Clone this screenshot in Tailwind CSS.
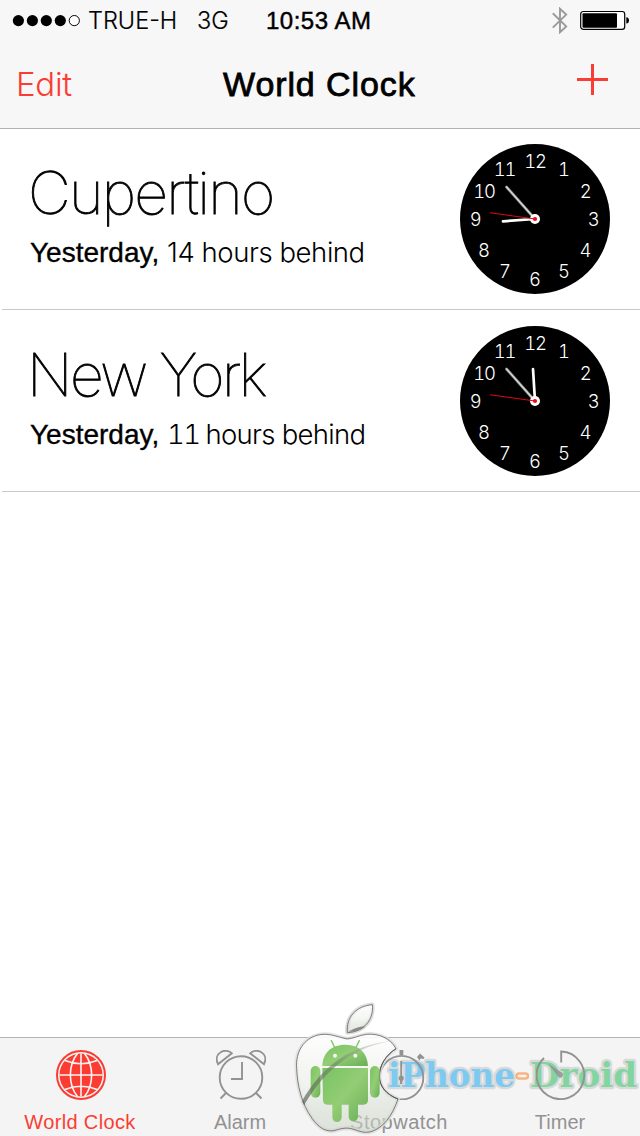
<!DOCTYPE html>
<html lang="en">
<head>
<meta charset="utf-8">
<title>World Clock</title>
<script src="https://cdn.jsdelivr.net/npm/@tailwindcss/browser@4"></script>
</head>
<body class="bg-white">
<div class="relative flex h-[1136px] w-[640px] flex-col overflow-hidden bg-white font-['Liberation_Sans',sans-serif] whitespace-nowrap text-black">

  <header class="h-[129px] shrink-0 border-b border-[#b2b2b2] bg-[#f7f7f7]">
    <!-- Status bar -->
    <div class="flex h-10 pr-[10px] pl-3 leading-[41px]">
      <svg class="mt-[13px] h-4 w-[70px] shrink-0" viewBox="0 0 70 16">
        <circle cx="6.4" cy="7.6" r="5.6"/><circle cx="20.4" cy="7.6" r="5.6"/><circle cx="34.3" cy="7.6" r="5.6"/><circle cx="48.3" cy="7.6" r="5.6"/>
        <circle cx="62.3" cy="7.6" r="5.1" fill="#fff" stroke="#000" stroke-width="1"/>
      </svg>
      <span class="ml-[6px] w-[109px] font-['Inter',sans-serif] text-[23.5px] font-light [-webkit-text-stroke:0.2px_#000]">TRUE-H</span>
      <span class="w-[69px] font-['Inter',sans-serif] text-[23.5px] font-light [-webkit-text-stroke:0.2px_#000]">3G</span>
      <span class="text-[24px] tracking-[0.5px] [-webkit-text-stroke:0.45px_#000]">10:53 AM</span>
      <svg class="mt-[7px] ml-auto h-[27px] w-4 shrink-0" viewBox="0 0 16 27" fill="none" stroke="#999" stroke-width="1.9">
        <path d="M.8 6.3 14.2 19.4 8 25.200V1.800L14.200 7.600.8 20.600"/>
      </svg>
      <svg class="mt-[10px] ml-[12px] h-5 w-[50px] shrink-0" viewBox="0 0 50 20">
        <rect x=".7" y="1.500" width="44" height="17.800" rx="2.600" fill="#fff" stroke="#000" stroke-width="1.200"/>
        <rect x="2.500" y="3.200" width="34.500" height="14.600" rx="1"/>
        <path d="M46.300 7.200c3.600 0 3.600 6.400 0 6.400z"/>
      </svg>
    </div>
    <!-- Navigation bar -->
    <div class="grid h-[88px] grid-cols-3 pr-[30px] pl-[16px] leading-[88px]">
      <span class="font-['Inter',sans-serif] text-[33px] font-light tracking-[-0.3px] text-[#fb3c33]">Edit</span>
      <h1 class="ml-[9px] text-[34px] tracking-[0.9px] [-webkit-text-stroke:0.8px_#000]">World Clock</h1>
      <svg class="mt-[23px] mr-px h-8 w-8 justify-self-end" viewBox="0 0 32 32" fill="none" stroke="#fb3c33" stroke-width="3"><path d="M0 16.500h31M15.500 1v31"/></svg>
    </div>
  </header>

  <main class="-mt-px flex-1">
    <section class="ml-[2px] flex h-[182px] justify-between border-b border-[#c8c8c8] pr-[30px] pl-[28px]">
      <div class="pt-[29px]">
        <h2 class="-ml-[2px] font-['Inter',sans-serif] text-[59px] leading-[72px] font-thin tracking-[-1.7px] [-webkit-text-stroke:0.9px_#000]">Cupertino</h2>
        <p class="flex leading-[46px]"><span class="w-[137px] pt-px text-[28px] [-webkit-text-stroke:0.35px_#000]">Yesterday,</span><span class="font-['Inter',sans-serif] text-[27.5px] font-light tracking-[-0.43px]">14 hours behind</span></p>
      </div>
      <svg class="mt-[16px] size-[150px]" viewBox="0 0 150 150">
        <circle cx="75" cy="75" r="75"/>
        <g fill="#fff" font-family="Inter, sans-serif" font-size="18.500" font-weight="300" text-anchor="middle" class="tabular-nums tracking-[-1.2px]">
          <text x="75" y="23.600">12</text><text x="103.500" y="31.800">1</text><text x="125.200" y="53.600">2</text><text x="133.200" y="82.400">3</text><text x="124.800" y="112.800">4</text><text x="103.500" y="133.800">5</text><text x="74.500" y="141.800">6</text><text x="44.500" y="133.800">7</text><text x="23.500" y="112.800">8</text><text x="15.200" y="82.400">9</text><text x="24" y="53.600">10</text><text x="44.500" y="31.800">11</text>
        </g>
        <g stroke-linecap="round">
          <path d="M75 75 46.500 43" stroke="#888" stroke-width="2.800"/><path d="M75 75 46.500 43" stroke="#ddd" stroke-width="1.200"/>
          <path d="M75 75 43 77.300" stroke="#fff" stroke-width="2.700"/>
        </g>
        <circle cx="75" cy="75" r="5" fill="#fff"/>
        <path d="M75 75 30 68.700" stroke="#e00812" stroke-width="1.100"/><circle cx="75" cy="75" r="2.100" fill="#f00812"/>
      </svg>
    </section>

    <section class="ml-[2px] flex h-[182px] justify-between border-b border-[#c8c8c8] pr-[30px] pl-[28px]">
      <div class="pt-[29px]">
        <h2 class="-ml-[3px] font-['Inter',sans-serif] text-[59px] leading-[72px] font-thin tracking-[-2.5px] [-webkit-text-stroke:0.9px_#000]">New York</h2>
        <p class="flex leading-[46px]"><span class="w-[137px] pt-px text-[28px] [-webkit-text-stroke:0.35px_#000]">Yesterday,</span><span class="font-['Inter',sans-serif] text-[27.5px] font-light tracking-[-0.7px]"><span class="tracking-[-1.6px] tabular-nums">11</span><span class="-ml-px"> hours behind</span></span></p>
      </div>
      <svg class="mt-[16px] size-[150px]" viewBox="0 0 150 150">
        <circle cx="75" cy="75" r="75"/>
        <g fill="#fff" font-family="Inter, sans-serif" font-size="18.500" font-weight="300" text-anchor="middle" class="tabular-nums tracking-[-1.2px]">
          <text x="75" y="23.600">12</text><text x="103.500" y="31.800">1</text><text x="125.200" y="53.600">2</text><text x="133.200" y="82.400">3</text><text x="124.800" y="112.800">4</text><text x="103.500" y="133.800">5</text><text x="74.500" y="141.800">6</text><text x="44.500" y="133.800">7</text><text x="23.500" y="112.800">8</text><text x="15.200" y="82.400">9</text><text x="24" y="53.600">10</text><text x="44.500" y="31.800">11</text>
        </g>
        <g stroke-linecap="round">
          <path d="M75 75 46.500 43" stroke="#888" stroke-width="2.800"/><path d="M75 75 46.500 43" stroke="#ddd" stroke-width="1.200"/>
          <path d="M75 75 73 43" stroke="#fff" stroke-width="2.700"/>
        </g>
        <circle cx="75" cy="75" r="5" fill="#fff"/>
        <path d="M75 75 30 68.700" stroke="#e00812" stroke-width="1.100"/><circle cx="75" cy="75" r="2.100" fill="#f00812"/>
      </svg>
    </section>
  </main>

  <!-- Tab bar -->
  <footer class="relative h-[99px] shrink-0 border-t border-[#b2b2b2] bg-[#f4f4f4]">
    <!-- Watermark lettering -->
    <svg class="absolute top-0 right-0 h-[98px] w-[260px]" viewBox="380 1038 260 98" font-family="DejaVu Serif, serif" font-weight="700" font-size="33.500" stroke-linejoin="round" paint-order="stroke" stroke="#d9d9d9" stroke-width="4.500">
      <text x="388" y="1086.500" fill="#7cc9f2" textLength="127" lengthAdjust="spacingAndGlyphs">iPhone</text>
      <rect x="516.500" y="1073.500" width="11.500" height="5" rx="2.500" fill="#f4f4f4" stroke="#f9b282" stroke-width="2.400" paint-order="normal"/>
      <text x="530" y="1086.500" fill="#83d5a0" textLength="107" lengthAdjust="spacingAndGlyphs">Droid</text>
    </svg>

    <nav class="relative grid grid-cols-4 pt-3 text-[20px] leading-6 text-[#929292]">
      <div class="flex flex-col items-center text-[#fb3c33]">
        <svg class="ml-[2px] size-[50px]" viewBox="0 0 50 50" fill="none">
          <circle cx="25" cy="25" r="24" stroke="currentColor" stroke-width="2"/><circle cx="25" cy="25" r="21.500" fill="currentColor"/>
          <g stroke="#f9f4f4" stroke-width="1.600"><path d="M25 3.500v43M3.500 25h43M9 10.500q16 6.500 32 0M9 39.500q16-6.500 32 0"/><path d="M21.500 3.500C12 15 12 35 21.500 46.500M28.500 3.500C38 15 38 35 28.500 46.500"/></g>
        </svg>
        <span class="mt-[10px] tracking-[0.35px]">World Clock</span>
      </div>
      <div class="flex flex-col items-center">
        <svg class="ml-[2px] size-[50px]" viewBox="0 0 50 50" fill="none" stroke="currentColor" stroke-width="1.900">
          <circle cx="25" cy="27.500" r="21.300"/><path d="M26 12v17H15M10.500 42.500 4.500 48.500M39.500 42.500l6 6"/>
          <path d="M2 14.200C-.5 9 .8 4.500 4.700 2.200 8.500-.2 13.500.8 15.800 3.300L2 14.200ZM48 14.200c2.500-5.200 1.200-9.700-2.700-12C41.500-.2 36.500.8 34.200 3.300L48 14.200Z"/>
        </svg>
        <span class="mt-[10px]">Alarm</span>
      </div>
      <div class="flex flex-col items-center">
        <svg class="ml-[2px] size-[50px]" viewBox="0 0 50 50" fill="none" stroke="currentColor" stroke-width="1.900">
          <circle cx="25.500" cy="27.700" r="21.800"/><path d="M25.200 11v23"/>
          <path d="M23.500 0h3.800v5h-3.800zM41 7l3-3.500 4.500 4-1 1.500-3-.5-1 2z" fill="currentColor" stroke="none"/>
          <path d="M25.200 25.500a2.800 2.800 0 0 1 1.300 5.200l-.7 3.300h-1.200l-.7-3.300a2.800 2.800 0 0 1 1.300-5.200z" fill="currentColor" stroke="none"/>
        </svg>
        <span class="mt-[10px] -ml-[2px] tracking-[0.5px]">Stopwatch</span>
      </div>
      <div class="flex flex-col items-center">
        <svg class="ml-[2px] size-[50px]" viewBox="0 0 50 50" fill="none" stroke="currentColor" stroke-width="1.900">
          <path d="M25.200 12.500V1.500A23.800 23.800 0 1 1 8 8"/><path d="M12 13.500 26.500 23a3 3 0 0 1-3.500 4.500z" fill="currentColor" stroke="none" opacity=".85"/>
        </svg>
        <span class="mt-[10px]">Timer</span>
      </div>
    </nav>
  </footer>

  <!-- Watermark badge: glass apple with a robot inside -->
  <svg class="absolute top-[1000px] left-[290px] h-[136px] w-[110px]" viewBox="0 0 330 408">
    <defs>
      <linearGradient id="glass" x1="0" y1="0" x2="0" y2="1"><stop offset="0" stop-color="#fff" stop-opacity=".9"/><stop offset=".5" stop-color="#f0f3ee" stop-opacity=".75"/><stop offset="1" stop-color="#c5d0bf" stop-opacity=".5"/></linearGradient>
      <linearGradient id="robot" x1="0" y1="0" x2="1" y2="1"><stop offset="0" stop-color="#78c364"/><stop offset=".5" stop-color="#93cd74"/><stop offset="1" stop-color="#68ae57"/></linearGradient>
      <linearGradient id="swoosh" x1="0" y1="1" x2="1" y2="0"><stop offset="0" stop-color="#555"/><stop offset=".5" stop-color="#6f8a68"/><stop offset="1" stop-color="#bbb" stop-opacity=".5"/></linearGradient>
    </defs>
    <g stroke-linejoin="round">
      <g fill="none" stroke="#dcdcdc" stroke-width="13">
        <path d="M172 98C168 50 200 18 247 14C252 58 222 96 172 98Z"/>
        <path d="M171 117C140 110 115 98 85 105C42 115 16 155 20 205C22 255 34 310 66 355C86 384 108 396 132 392C152 386 166 382 184 386C206 392 222 402 246 394C280 382 306 350 324 297C290 284 268 260 268 228C268 196 288 165 318 146C300 112 262 100 230 103C206 106 190 116 171 117Z" stroke-opacity=".8"/>
      </g>
      <path d="M172 98C168 50 200 18 247 14C252 58 222 96 172 98Z" fill="url(#glass)" stroke="#666" stroke-width="2.500"/>
      <path d="M176 95Q206 78 226 80Q206 96 176 95Z" fill="#888"/>
      <path d="M171 117C140 110 115 98 85 105C42 115 16 155 20 205C22 255 34 310 66 355C86 384 108 396 132 392C152 386 166 382 184 386C206 392 222 402 246 394C280 382 306 350 324 297C290 284 268 260 268 228C268 196 288 165 318 146C300 112 262 100 230 103C206 106 190 116 171 117Z" fill="url(#glass)" stroke="#666" stroke-width="2.500"/>
      <path d="M318 146C288 165 268 196 268 228C268 260 290 284 324 297" fill="none" stroke="#555" stroke-width="3"/>
    </g>
    <g fill="url(#robot)">
      <path d="M97 198C98 160 122 134 166 134C210 134 232 160 234 198Z"/>
      <path d="M97 204H234V300Q234 314 220 314H204V350A14 14 0 0 1 176 350V314H155V352A14 14 0 0 1 127 352V314H112Q99 314 99 300Z"/>
      <rect x="62" y="198" width="29" height="95" rx="14.500"/><rect x="240" y="198" width="29" height="95" rx="14.500"/>
    </g>
    <path d="M124 122 134 142M208 122 198 142" stroke="#84c46c" stroke-width="4" stroke-linecap="round"/>
    <circle cx="135" cy="167" r="6" fill="#f3f8ef"/><circle cx="196" cy="167" r="6" fill="#f3f8ef"/>
    <path d="M36 304C90 205 180 130 316 122C200 134 105 205 42 316Z" fill="url(#swoosh)" opacity=".65"/>
  </svg>
</div>
</body>
</html>
